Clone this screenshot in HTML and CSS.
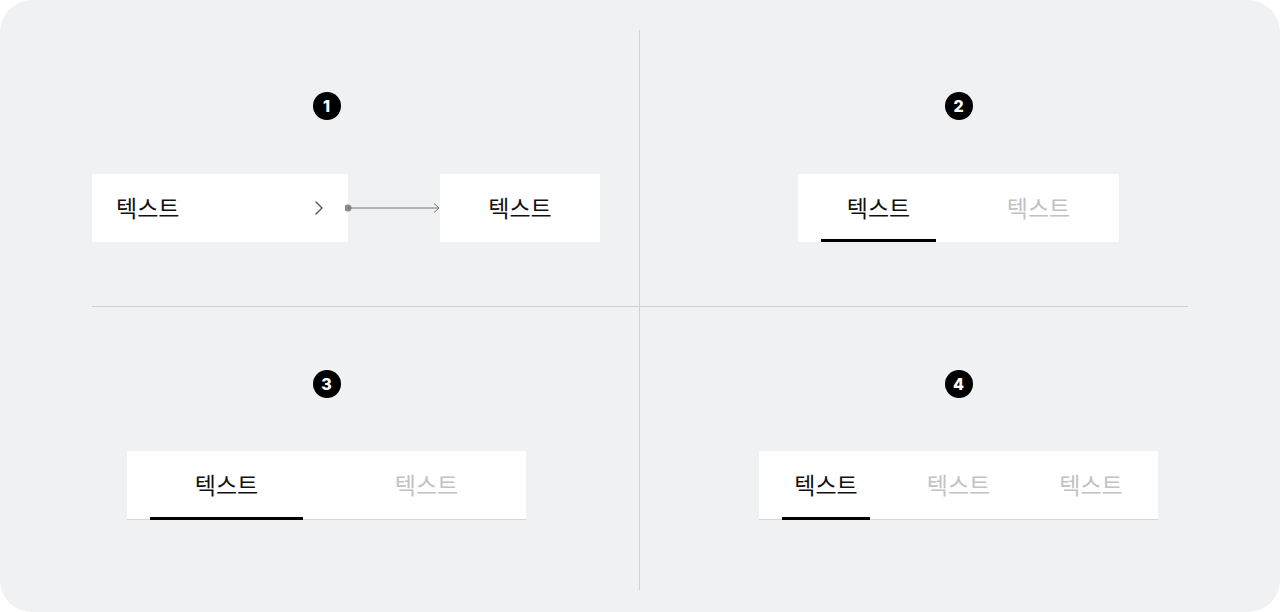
FILE: index.html
```html
<!DOCTYPE html>
<html lang="ko">
<head>
<meta charset="utf-8">
<title>Tabs</title>
<link rel="stylesheet" href="styles.css">
</head>
<body>
<div class="board">
  <section class="cell cell-left cell-top">
    <span class="badge">1</span>
    <div class="flow">
      <div class="item">
        <span class="label">텍스트</span>
        <svg class="chevron" width="8" height="14" viewBox="0 0 8 14"><path d="M1 1 L7 7 L1 13" fill="none" stroke="#555" stroke-width="1.4" stroke-linecap="round" stroke-linejoin="round"/></svg>
      </div>
      <svg class="connector" width="95" height="14" viewBox="0 0 95 14"><circle cx="3" cy="7" r="3.5" fill="#8a8a8a"/><path d="M3 7 H94" stroke="#777" stroke-width="1"/><path d="M89 2.5 L94 7 L89 11.5" fill="none" stroke="#777" stroke-width="1"/></svg>
      <div class="target"><span class="label">텍스트</span></div>
    </div>
  </section>
  <div class="vline"></div>
  <section class="cell cell-right cell-top">
    <span class="badge">2</span>
    <div class="tabs tabs-plain">
      <span class="tab tab-wide is-active">텍스트</span>
      <span class="tab tab-wide">텍스트</span>
    </div>
  </section>
  <div class="hline"></div>
  <section class="cell cell-left cell-bottom">
    <span class="badge">3</span>
    <div class="tabs tabs-lined tabs-two">
      <span class="tab tab-half is-active">텍스트</span>
      <span class="tab tab-half">텍스트</span>
    </div>
  </section>
  <section class="cell cell-right cell-bottom">
    <span class="badge">4</span>
    <div class="tabs tabs-lined">
      <span class="tab tab-third is-active">텍스트</span>
      <span class="tab tab-third">텍스트</span>
      <span class="tab tab-third">텍스트</span>
    </div>
  </section>
</div>
</body>
</html>
```

FILE: styles.css
```css
* { box-sizing: border-box; }

html, body {
  margin: 0;
  background: #ffffff;
}

body {
  font-family: "Noto Sans CJK KR", "Noto Sans", sans-serif;
}

.board {
  width: 1280px;
  height: 612px;
  background: #f0f1f3;
  border-radius: 32px;
  padding: 30px 0 22px 14px;
  display: grid;
  grid-template-columns: 625px 1px 1fr;
  grid-template-rows: 276px 1px 1fr;
}

.vline {
  grid-column: 2;
  grid-row: 1 / 4;
  background: #d0d1d4;
}

.hline {
  grid-column: 1 / 4;
  grid-row: 2;
  margin: 0 92px 0 78px;
  background: #d0d1d4;
}

.cell {
  display: flex;
  flex-direction: column;
  align-items: center;
  gap: 53px;
}

.cell-left { grid-column: 1; }
.cell-right { grid-column: 3; padding-right: 3px; }
.cell-top { grid-row: 1; padding-top: 62px; }
.cell-bottom { grid-row: 3; padding-top: 63px; }

.badge {
  width: 28px;
  height: 28px;
  border-radius: 50%;
  background: #000;
  color: #fff;
  font-family: Inter, "Liberation Sans", sans-serif;
  font-weight: 800;
  font-size: 16px;
  line-height: 28px;
  text-align: center;
}

.flow {
  align-self: flex-start;
  margin-left: 78px;
  margin-top: 1px;
  display: flex;
  align-items: center;
}

.item {
  width: 256px;
  height: 68px;
  background: #fff;
  padding: 0 24px;
  display: flex;
  align-items: center;
  justify-content: space-between;
}

.chevron { margin-right: 1px; }

.connector {
  margin-left: -3px;
}

.target {
  width: 160px;
  height: 68px;
  background: #fff;
  display: flex;
  align-items: center;
  justify-content: center;
}

.label,
.tab {
  font-size: 23px;
  font-weight: 400;
  color: #111;
  line-height: 1;
}

.label { margin-top: -2px; }

.tabs {
  display: flex;
  background: #fff;
  padding: 0 23px;
  gap: 45px;
}

.tabs-plain { height: 68px; margin-top: 1px; }

.tabs-lined {
  height: 69px;
  box-shadow: inset 0 -1px 0 #d6d6d6;
}

.tabs-two { gap: 47px; }

.tab {
  display: flex;
  align-items: center;
  justify-content: center;
  padding-bottom: 2px;
  color: #c2c2c2;
}

.tab.is-active {
  color: #111;
  box-shadow: inset 0 -3px 0 #000;
}

.tab-wide { width: 115px; }
.tab-half { width: 153px; }
.tab-third { width: 87.5px; }
```
